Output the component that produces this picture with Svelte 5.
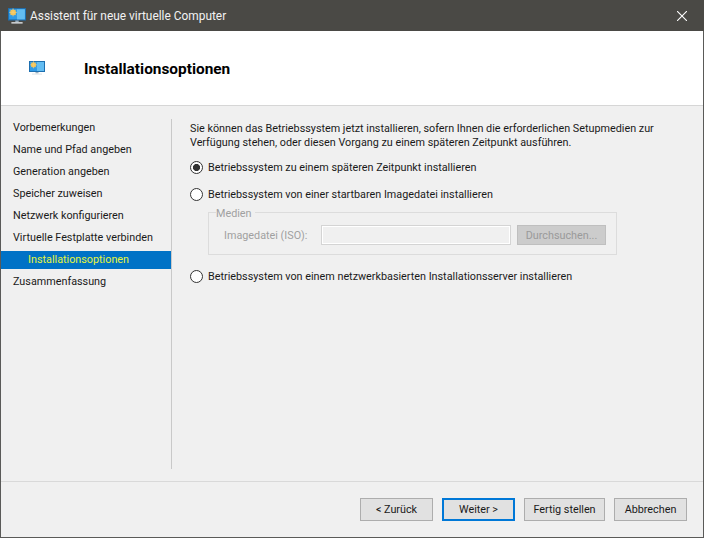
<script>
  const steps = [
    { label: "Vorbemerkungen" },
    { label: "Name und Pfad angeben" },
    { label: "Generation angeben" },
    { label: "Speicher zuweisen" },
    { label: "Netzwerk konfigurieren" },
    { label: "Virtuelle Festplatte verbinden" },
    { label: "Installationsoptionen", active: true },
    { label: "Zusammenfassung" },
  ];
</script>

{#snippet monitor(size)}
  <svg class="monitor" width={size} height={size} viewBox="0 0 16 16">
    <rect x="0.5" y="1.5" width="15" height="10" fill="#2f9be8" stroke="#1d6fb0" stroke-width="1" />
    <rect x="8" y="2" width="7" height="9" fill="#63bdf2" />
    <circle cx="4.5" cy="4.8" r="2.6" fill="#f4c04a" />
    <path d="M4.5 1.2v7.2M1 4.8h7M2 2.3l5 5M7 2.3l-5 5" stroke="#f2cf7c" stroke-width="0.6" />
    <rect x="6.5" y="12" width="3" height="1.5" fill="#9ab0c0" />
    <rect x="3" y="13.5" width="10" height="1.2" fill="#e3e7ea" />
  </svg>
{/snippet}

<div class="window">
  <div class="titlebar">
    {@render monitor(18)}
    <span class="title">Assistent für neue virtuelle Computer</span>
    <svg class="close" width="10" height="10" viewBox="0 0 10 10">
      <path d="M0 0L10 10M10 0L0 10" stroke="#fff" stroke-width="1.1" fill="none" />
    </svg>
  </div>

  <div class="header">
    {@render monitor(16)}
    <h1>Installationsoptionen</h1>
  </div>

  <div class="main">
    <nav class="steps">
      {#each steps as step}
        <div class="step" class:active={step.active}>{step.label}</div>
      {/each}
    </nav>

    <div class="content">
      <p>Sie können das Betriebssystem jetzt installieren, sofern Ihnen die erforderlichen Setupmedien zur Verfügung stehen, oder diesen Vorgang zu einem späteren Zeitpunkt ausführen.</p>

      <label class="radio first">
        <input type="radio" name="install" checked />
        <span>Betriebssystem zu einem späteren Zeitpunkt installieren</span>
      </label>
      <label class="radio">
        <input type="radio" name="install" />
        <span>Betriebssystem von einer startbaren Imagedatei installieren</span>
      </label>

      <div class="group">
        <span class="legend">Medien</span>
        <span class="iso-label">Imagedatei (ISO):</span>
        <input class="iso" type="text" disabled />
        <button class="browse" disabled>Durchsuchen...</button>
      </div>

      <label class="radio">
        <input type="radio" name="install" />
        <span>Betriebssystem von einem netzwerkbasierten Installationsserver installieren</span>
      </label>
    </div>
  </div>

  <div class="footer">
    <button class="btn back">&lt; Zurück</button>
    <button class="btn next">Weiter &gt;</button>
    <button class="btn finish">Fertig stellen</button>
    <button class="btn cancel">Abbrechen</button>
  </div>
</div>

<style>
  :global(body) {
    margin: 0;
    background: #f0f0f0;
  }

  .window {
    width: 704px;
    height: 538px;
    box-sizing: border-box;
    display: flex;
    flex-direction: column;
    background: #f0f0f0;
    border: 1px solid #5a5a58;
    border-top: none;
    font-family: Roboto, "Open Sans", sans-serif;
    font-size: 10.8px;
    color: #1a1a1a;
  }

  .titlebar {
    height: 31px;
    margin: 0 -1px;
    padding: 0 17px 0 8px;
    flex: none;
    display: flex;
    align-items: center;
    background: #4a4945;
    color: #f2f2f2;
  }

  .title {
    margin-left: 4px;
    font-size: 11.9px;
  }

  .close {
    margin-left: auto;
  }

  .header {
    height: 74px;
    flex: none;
    display: flex;
    align-items: center;
    padding-left: 28px;
    background: #fff;
    border-bottom: 1px solid #d6d6d6;
  }

  h1 {
    margin: 2px 0 0 39px;
    font-size: 15.4px;
    font-weight: 700;
    color: #000;
  }

  .main {
    flex: 1;
    min-height: 0;
    display: flex;
    padding-top: 13px;
  }

  .steps {
    width: 170px;
    height: 350px;
    flex: none;
    border-right: 1px solid #c9c9c9;
    margin-right: 18px;
  }

  .step {
    height: 18px;
    margin-bottom: 4px;
    padding-left: 12px;
    line-height: 18px;
  }

  .step.active {
    padding-left: 27px;
    background: #0072c6;
    color: #e6f53c;
  }

  .content {
    width: 496px;
    flex: none;
  }

  p {
    margin: 3px 0 0;
    line-height: 13.5px;
  }

  .radio {
    height: 16px;
    display: flex;
    align-items: center;
    margin-top: 11px;
  }

  .radio.first {
    margin-top: 10px;
  }

  .radio input {
    appearance: none;
    width: 13px;
    height: 13px;
    margin: 0 5px 0 0;
    box-sizing: border-box;
    border: 1px solid #333;
    border-radius: 50%;
    background: #fff;
  }

  .radio input:checked {
    background: radial-gradient(circle, #333 0 3.2px, #fff 3.9px);
  }

  .group {
    position: relative;
    width: 409px;
    height: 43px;
    box-sizing: border-box;
    margin: 10px 0 13px 18px;
    padding: 3px 9px 0 15px;
    border: 1px solid #dcdcdc;
    display: flex;
    align-items: center;
    color: #a0a0a0;
  }

  .legend {
    position: absolute;
    left: 7px;
    top: -6px;
    padding: 0 3px 0 0;
    line-height: 14px;
    background: #f0f0f0;
  }

  .iso-label {
    width: 97px;
    flex: none;
  }

  .iso {
    width: 190px;
    height: 20px;
    box-sizing: border-box;
    margin: 0 6px 0 0;
    flex: none;
    background: #f0f0f0;
    border: 1px solid #d4d4d4;
    outline: 1px solid #fff;
    outline-offset: -2px;
  }

  .browse {
    width: 89px;
    height: 20px;
    flex: none;
    padding: 0;
    font: inherit;
    color: #9a9a9a;
    background: #cccccc;
    border: 1px solid #bfbfbf;
  }

  .footer {
    height: 56px;
    flex: none;
    display: flex;
    align-items: flex-start;
    gap: 9px;
    padding: 16px 16px 0 0;
    justify-content: flex-end;
    border-top: 1px solid #d9d9d9;
    box-sizing: border-box;
  }

  .btn {
    height: 23px;
    box-sizing: border-box;
    padding: 0;
    font: inherit;
    color: #1a1a1a;
    background: #e1e1e1;
    border: 1px solid #adadad;
  }

  .back,
  .next,
  .cancel {
    width: 73px;
  }

  .finish {
    width: 81px;
  }

  .next {
    border: 2px solid #0078d7;
  }
</style>
